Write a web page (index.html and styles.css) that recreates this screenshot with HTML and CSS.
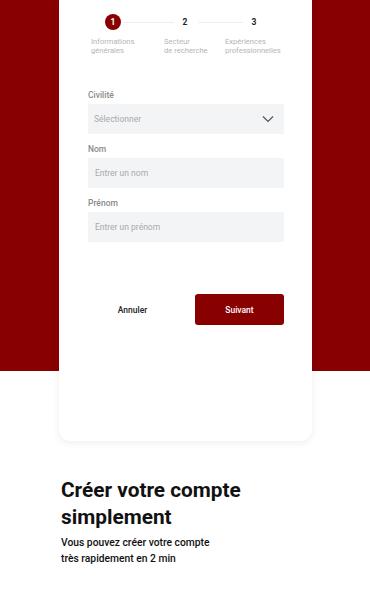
FILE: index.html
```html
<!DOCTYPE html>
<html lang="fr">
<head>
<meta charset="utf-8">
<link rel="stylesheet" href="styles.css">
</head>
<body>
<div class="hero">
  <div class="card">
    <div class="stepper">
      <div class="dots">
        <span class="dot active">1</span><span class="line"></span>
        <span class="dot">2</span><span class="line"></span>
        <span class="dot">3</span>
      </div>
      <div class="labels">
        <div class="step-label l1">Informations<br>générales</div>
        <div class="step-label l2">Secteur<br>de recherche</div>
        <div class="step-label l3">Expériences<br>professionnelles</div>
      </div>
    </div>
    <form class="form">
      <label class="label">Civilité</label>
      <div class="field select"><span>Sélectionner</span>
        <svg width="12" height="8" viewBox="0 0 12 8"><path d="M1 1.5 L6 6.5 L11 1.5" fill="none" stroke="#555" stroke-width="1.2"/></svg>
      </div>
      <label class="label">Nom</label>
      <div class="field input"><span>Entrer un nom</span></div>
      <label class="label">Prénom</label>
      <div class="field input"><span>Entrer un prénom</span></div>
    </form>
    <div class="actions">
      <button class="btn ghost" type="button">Annuler</button>
      <button class="btn primary" type="button">Suivant</button>
    </div>
  </div>
</div>
<section class="intro">
  <h1>Créer votre compte<br>simplement</h1>
  <p>Vous pouvez créer votre compte<br>très rapidement en 2 min</p>
</section>
</body>
</html>
```
FILE: styles.css
```css
* { box-sizing: border-box; }
html, body { margin: 0; padding: 0; }
body {
  width: 370px;
  height: 592px;
  overflow: hidden;
  background: #fff;
  font-family: Roboto, "Liberation Sans", Arial, sans-serif;
  color: #111;
}
.hero {
  background: linear-gradient(#880000 0, #880000 371px, #fff 371px);
  padding: 0 58px 0 59px;
}
.card {
  background: #fff;
  height: 441px;
  border-radius: 0 0 12px 12px;
  box-shadow: 0 2px 8px rgba(0,0,0,0.07);
  padding: 14px 28px 0 29px;
}
.dots {
  display: flex;
  align-items: center;
  height: 16px;
  margin-left: 17px;
  width: 185px;
}
.dot {
  width: 16px;
  height: 16px;
  border-radius: 50%;
  display: flex;
  align-items: center;
  justify-content: center;
  font-size: 8.5px;
  font-weight: 700;
  color: #222;
  flex: none;
}
.dot.active { background: #880000; color: #fff; }
.line {
  height: 1px;
  background: #eee;
  margin: 0 3px;
  width: 50px;
}
.line + .dot + .line { width: 45px; margin-left: 5px; }
.labels {
  display: flex;
  margin-top: 7px;
  padding-left: 3px;
}
.step-label {
  font-size: 7.6px;
  line-height: 9px;
  color: #b5b5b5;
  white-space: nowrap;
}
.l1 { width: 73px; }
.l2 { width: 61px; }
.form {
  display: flex;
  flex-direction: column;
  margin-top: 35px;
}
.label {
  font-size: 8.5px;
  font-weight: 500;
  color: #8a8a8a;
  line-height: 10px;
  margin-bottom: 4px;
}
.field {
  height: 30px;
  background: #f3f4f6;
  display: flex;
  align-items: center;
  font-size: 8.5px;
  color: #aaa;
  margin-bottom: 10px;
}
.select { padding: 0 10px 0 6px; justify-content: space-between; }
.input { padding: 0 7px; }
.actions {
  display: flex;
  justify-content: space-between;
  margin-top: 42px;
}
.btn {
  font-family: inherit;
  font-size: 8.5px;
  font-weight: 500;
  border: 0;
  width: 89px;
  height: 31px;
  border-radius: 3px;
  cursor: pointer;
}
.ghost { background: transparent; color: #222; }
.primary { background: #880000; color: #fff; }
.intro { padding: 36px 20px 0 61px; }
.intro h1 {
  font-size: 20.8px;
  line-height: 27px;
  font-weight: 700;
  margin: 0 0 4px;
  color: #111;
}
.intro p {
  font-size: 10.3px;
  line-height: 16px;
  font-weight: 500;
  margin: 0;
  color: #111;
}
```
